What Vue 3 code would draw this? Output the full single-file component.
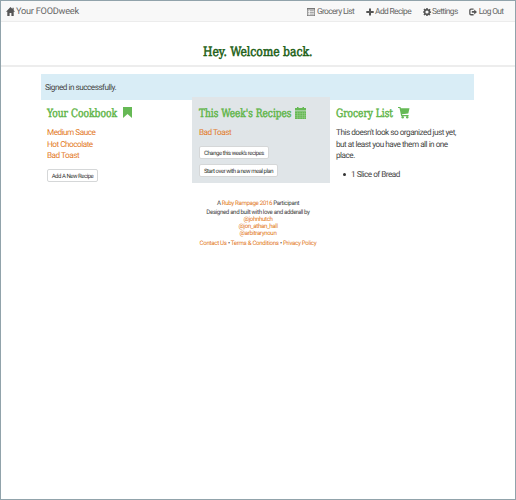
<script setup>
const nav = [
  { icon: 'list', label: 'Grocery List' },
  { icon: 'plus', label: 'Add Recipe' },
  { icon: 'gear', label: 'Settings' },
  { icon: 'out', label: 'Log Out' },
]
const recipes = ['Medium Sauce', 'Hot Chocolate', 'Bad Toast']
const people = ['@johnhutch', '@jon_athan_hall', '@arbitrarynoun']
</script>

<template>
  <div class="page">
    <nav class="bar">
      <a class="brand">
        <svg class="home" viewBox="0 0 9 9"><path d="M4.5 0 0 4.7h1.3V9h2.3V6h1.8v3h2.3V4.7H9L7.7 3.3V.7H6.5v1.4z" /></svg>
        <span>Your FOODweek</span>
      </a>
      <div class="links">
        <a v-for="n in nav" :key="n.label" :class="n.icon">
          <svg v-if="n.icon === 'list'" viewBox="0 0 8 8"><path fill-rule="evenodd" d="M0 0h8v8H0zM.7 1.6v5.7h6.6V1.6z" /><path class="rows" d="M1.2 2.7h1M2.9 2.7h4M1.2 4.4h1M2.9 4.4h4M1.2 6.1h1M2.9 6.1h4" /></svg>
          <svg v-else-if="n.icon === 'plus'" viewBox="0 0 8 8"><path d="M3 .5h2V3h2.7v2H5v2.6H3V5H.3V3H3z" /></svg>
          <svg v-else-if="n.icon === 'gear'" viewBox="0 0 8 8"><path fill-rule="evenodd" d="M3.3 0h1.4l.2 1.1.7.3 1-.7 1 1-.7 1 .2.6 1 .2v1.3l-1 .2-.3.7.7.9-1 1-1-.7-.7.3L4.6 8H3.3l-.2-1-.6-.3-1 .7-1-1 .7-.9-.3-.7-.9-.2V3.4l.9-.2.3-.6-.7-1 1-1 1 .7.6-.3zM4 2.4a1.6 1.6 0 1 0 0 3.2 1.6 1.6 0 0 0 0-3.2" /></svg>
          <svg v-else viewBox="0 0 8 8"><path d="M4.6.5H2Q.2.5.2 2.2v3.5Q.2 7.4 2 7.4h2.6V6.1H2.1q-.6 0-.6-.6V2.4q0-.6.6-.6h2.5zM5.2 1.5 8 4 5.2 6.5V4.8H2.8V3.1h2.4z" /></svg>
          <span>{{ n.label }}</span>
        </a>
      </div>
    </nav>

    <header class="hero">
      <svg class="title" width="114" height="20"><text x="2" y="14" textLength="109.5" lengthAdjust="spacingAndGlyphs">Hey. Welcome back.</text></svg>
    </header>

    <main class="container">
      <div class="alert"><span>Signed in successfully.</span></div>
      <div class="cols">
        <section class="col first">
          <h2>
            <svg width="73" height="16"><text x="0" y="11" textLength="70" lengthAdjust="spacingAndGlyphs">Your Cookbook</text></svg>
            <svg class="mark" width="9" height="11"><path d="M0 0h9v11L4.5 7 0 11z" /></svg>
          </h2>
          <div class="items"><a v-for="r in recipes" :key="r">{{ r }}</a></div>
          <button class="b1">Add A New Recipe</button>
        </section>
        <section class="col week">
          <h2>
            <svg width="95" height="16"><text x="0" y="11" textLength="92.5" lengthAdjust="spacingAndGlyphs">This Week's Recipes</text></svg>
            <svg class="cal" width="11" height="12"><path d="M0 1h2V0h1.5v1h4V0H9v1h2v2.5H0zM0 4.3h11V12H0z" /><path class="grid" d="M0 6.5h11M0 8.5h11M0 10.3h11M2.5 5v7M5 5v7M7.5 5v7M9.5 5v7" /></svg>
          </h2>
          <div class="items"><a>Bad Toast</a></div>
          <button class="b2">Change this week's recipes</button>
          <button class="b3">Start over with a new meal plan</button>
        </section>
        <section class="col grocery">
          <h2>
            <svg width="60" height="16"><text x="0" y="11" textLength="57" lengthAdjust="spacingAndGlyphs">Grocery List</text></svg>
            <svg class="cart" width="12" height="12"><path d="M0 0h2.4l.5 1.2h8.6L10.3 6.6 4 7.3l.2.7h6.4v1.2H3.2L1.5 1H0z" /><circle cx="4.7" cy="10.3" r="1.2" /><circle cx="9.2" cy="10.3" r="1.2" /></svg>
          </h2>
          <p>This doesn't look so organized just yet,<br />but at least you have them all in one<br />place.</p>
          <ul><li>1 Slice of Bread</li></ul>
        </section>
      </div>
    </main>

    <footer>
      <div class="ramp">A <a>Ruby Rampage 2016</a> Participant</div>
      <div class="built">Designed and built with love and adderall by</div>
      <div v-for="p in people" :key="p" class="person"><a>{{ p }}</a></div>
      <div class="legal"><a>Contact Us</a> • <a>Terms &amp; Conditions</a> • <a>Privacy Policy</a></div>
    </footer>
  </div>
</template>

<style>
body { margin: 0; background: #fff; }
</style>

<style scoped>
.page { box-sizing: border-box; width: 516px; height: 500px; border: 1px solid #91a3ab; background: #fff; font-family: Roboto, "Liberation Sans", sans-serif; font-size: 8.2px; letter-spacing: -.5px; line-height: 11.5px; color: #444; overflow: hidden; text-rendering: geometricPrecision; }
svg { display: block; flex: none; letter-spacing: 0; overflow: visible; }
.bar { box-sizing: border-box; height: 21px; padding: 0 11.5px 0 5px; display: flex; justify-content: space-between; align-items: center; background: #f8f8f8; border-bottom: 1px solid #ececec; color: #666; font-size: 8.4px; letter-spacing: -.62px; white-space: nowrap; }
.bar svg { width: 8px; height: 8px; fill: #555; }
.brand, .links, .links a { display: flex; align-items: center; }
.brand { gap: 1px; font-size: 9.2px; letter-spacing: -.24px; }
.brand span { padding-top: 2px; }
.bar .home { width: 9px; height: 9px; }
.bar .rows { stroke: #888; stroke-width: .8; }
.links { gap: 11.5px; padding-top: 1px; }
.links a { gap: 1.5px; }
.links span { padding-top: 2px; }
.bar .list svg { fill: #777; }
.hero { box-sizing: border-box; height: 45px; border-bottom: 2px solid #ededed; display: flex; justify-content: center; padding-top: 20px; }
.title text { font: 13px "DejaVu Serif Condensed", "DejaVu Serif", serif; fill: #1b5e14; stroke: #1b5e14; stroke-width: .5; }
.container { width: 433px; margin: 7px 0 0 40px; }
.alert { height: 26px; line-height: 28px; padding-left: 4px; background: #d9edf6; }
.cols { display: flex; margin-top: -3px; }
.col { box-sizing: border-box; height: 86px; padding: 9px 0 0 6px; white-space: nowrap; }
.first { width: 151px; }
.week { width: 138px; padding-left: 7px; background: #e0e5e8; }
.grocery { width: 144px; }
h2 { display: flex; margin: 0; height: 15px; gap: 3px; }
h2 text { font: 11.5px "DejaVu Serif Condensed", "DejaVu Serif", serif; fill: #5fb548; stroke: #5fb548; stroke-width: .45; }
h2 path, h2 circle { fill: #66b955; }
h2 .cal .grid { fill: none; stroke: #a5d29b; stroke-width: .4; }
.cal { margin-left: -2px; margin-top: 1px; }
.cart { margin: 1px 0 0 -1px; }
.mark { margin-top: 1px; }
.items { margin-top: 7px; }
.items a { display: block; }
a { color: #e37a26; }
.bar a { color: #666; }
button { display: flex; align-items: center; justify-content: center; box-sizing: border-box; height: 13px; padding: 1px 0 0; border: 1px solid #d5d7d8; border-radius: 2px; background: #fff; color: #333; font: 6px/11px Roboto, sans-serif; letter-spacing: -.46px; text-rendering: inherit; white-space: nowrap; }
.b1 { width: 51px; margin-top: 6.5px; }
.b2 { width: 70px; margin-top: 6.5px; }
.b3 { width: 79px; margin-top: 5px; }
p { margin: 7px 0 0; }
ul { margin: 7px 0 0; padding-left: 15px; list-style: none; }
li::before { content: ""; display: inline-block; width: 3px; height: 3px; border-radius: 50%; background: #333; margin: 0 5px 1px -8px; }
footer { margin-top: 17px; text-align: center; font-size: 6.2px; letter-spacing: -.38px; line-height: 7px; white-space: nowrap; }
.built { margin-top: 2px; }
.legal { margin-top: 3px; letter-spacing: -.33px; }
</style>
